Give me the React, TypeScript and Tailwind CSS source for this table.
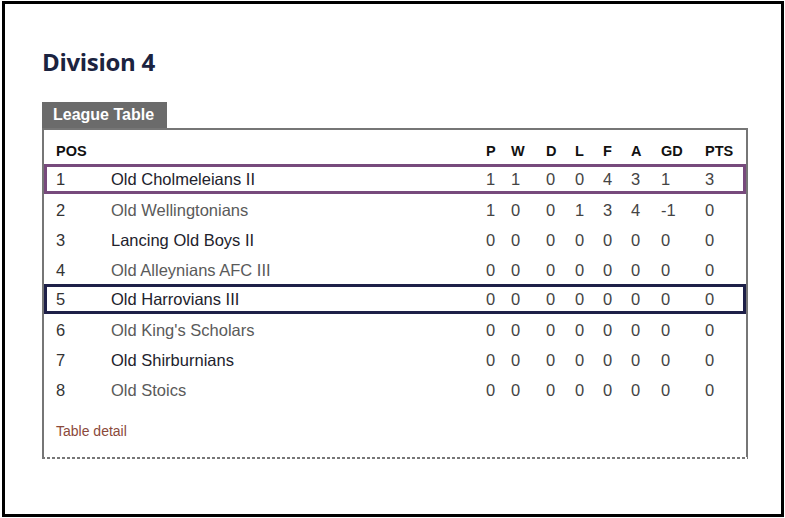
const rows = [
  { pos: 1, team: 'Old Cholmeleians II', p: 1, w: 1, d: 0, l: 0, f: 4, a: 3, gd: 1, pts: 3, hl: 'border-[#774a7c]' },
  { pos: 2, team: 'Old Wellingtonians', p: 1, w: 0, d: 0, l: 1, f: 3, a: 4, gd: -1, pts: 0 },
  { pos: 3, team: 'Lancing Old Boys II', p: 0, w: 0, d: 0, l: 0, f: 0, a: 0, gd: 0, pts: 0 },
  { pos: 4, team: 'Old Alleynians AFC III', p: 0, w: 0, d: 0, l: 0, f: 0, a: 0, gd: 0, pts: 0 },
  { pos: 5, team: 'Old Harrovians III', p: 0, w: 0, d: 0, l: 0, f: 0, a: 0, gd: 0, pts: 0, hl: 'border-[#1e2048]' },
  { pos: 6, team: "Old King's Scholars", p: 0, w: 0, d: 0, l: 0, f: 0, a: 0, gd: 0, pts: 0 },
  { pos: 7, team: 'Old Shirburnians', p: 0, w: 0, d: 0, l: 0, f: 0, a: 0, gd: 0, pts: 0 },
  { pos: 8, team: 'Old Stoics', p: 0, w: 0, d: 0, l: 0, f: 0, a: 0, gd: 0, pts: 0 },
];

// pos | team | P W D L F A GD PTS
const cols = 'grid grid-cols-[55px_375px_25px_35px_29px_28px_28px_30px_44px_1fr]';

export default function App() {
  return (
    <div className="w-[785px] h-[518px] bg-white pl-[2px] pt-[1px] font-['Liberation_Sans',Arial,sans-serif]">
      <div className="w-[782px] h-[516px] border-[3px] border-black pl-[37px] pr-[33px]">
        <h1 className="mt-[42px] text-[24px] leading-[32px] font-bold text-[#1b2340] font-['Open_Sans','Noto_Sans',sans-serif] tracking-[-0.3px]">
          Division 4
        </h1>

        {/* League table */}
        <div className="mt-[24px]">
          <div className="inline-block bg-[#6b6b6b] text-white font-bold text-[16px] leading-[26px] pl-[11px] pr-[13px]">
            League Table
          </div>
          <div className="border-t-2 border-l-2 border-r-2 border-[#767676]">
            <div className={`${cols} h-[34px] items-center pl-[12px] pt-[10px] text-[14.5px] font-bold text-[#111]`}>
              <span>POS</span>
              <span></span>
              <span>P</span>
              <span>W</span>
              <span>D</span>
              <span>L</span>
              <span>F</span>
              <span>A</span>
              <span>GD</span>
              <span>PTS</span>
            </div>
            {rows.map((r) => (
              <div
                key={r.pos}
                className={`${cols} h-[30px] items-center text-[16.5px] text-[#444] ${
                  r.hl ? `border-[3px] ${r.hl} pl-[9px]` : 'pl-[12px] pt-[3px]'
                }`}
              >
                <span className="text-[#333]">{r.pos}</span>
                <span className={r.pos % 2 === 1 ? 'text-[#22222c]' : 'text-[#5a5a5a]'}>{r.team}</span>
                <span>{r.p}</span>
                <span>{r.w}</span>
                <span>{r.d}</span>
                <span>{r.l}</span>
                <span>{r.f}</span>
                <span>{r.a}</span>
                <span>{r.gd}</span>
                <span>{r.pts}</span>
              </div>
            ))}
            <div className="h-[53px] pl-[12px] pt-[18px] text-[14px] leading-[18px] text-[#8b4a3b]">
              Table detail
            </div>
          </div>
          <div className="h-[2px] bg-[repeating-linear-gradient(90deg,#777_0_3px,transparent_3px_5px)]" />
        </div>
      </div>
    </div>
  );
}
